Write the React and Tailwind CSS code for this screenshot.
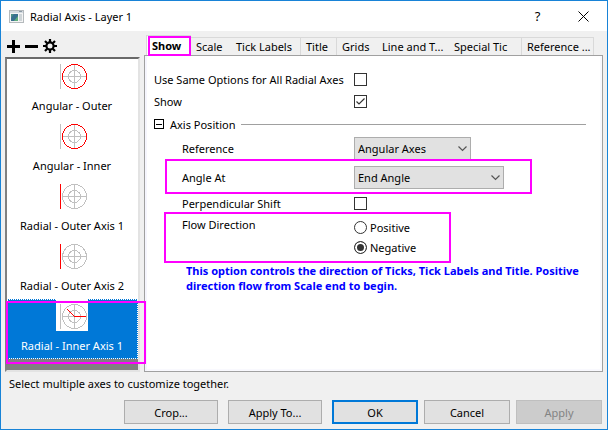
import React from "react";

const AXES = [
  { name: "Angular - Outer", kind: "angular" },
  { name: "Angular - Inner", kind: "angular" },
  { name: "Radial - Outer Axis 1", kind: "outer" },
  { name: "Radial - Outer Axis 2", kind: "outer" },
  { name: "Radial - Inner Axis 1", kind: "inner", selected: true },
];

const TABS = [
  { name: "Scale", className: "w-[40px]" },
  { name: "Tick Labels", className: "w-[70px] border-r" },
  { name: "Title", className: "w-[36px] border-r" },
  { name: "Grids", className: "w-[40px]" },
  { name: "Line and T...", className: "w-[72px]" },
  { name: "Special Tic", className: "w-[73px] border-r" },
  { name: "Reference ...", className: "w-[72px] border-r" },
];

const BUTTON = "h-6 border text-center";
const CHECK =
  "block size-[13px] shrink-0 appearance-none border border-[#333] bg-white";

function Highlight({ className }) {
  return (
    <span
      aria-hidden="true"
      className={`pointer-events-none absolute z-10 border-2 border-[#ff00ff] ${className}`}
    />
  );
}

function AxisIcon({ kind }) {
  const gray = "#c0c0c0";
  const red = "#ff0000";
  return (
    <svg
      width="32"
      height="32"
      viewBox="0 0 32 32"
      fill="none"
      className="bg-white"
      shapeRendering="crispEdges"
      aria-hidden="true"
    >
      <path d="M4.5 5v25" stroke={kind === "outer" ? red : gray} />
      <circle cx="18.5" cy="17.5" r="6" stroke={gray} />
      <path d="M18.5 5v25M6 17.5h25" stroke={gray} />
      <circle
        cx="18.5"
        cy="17.5"
        r="12"
        stroke={kind === "angular" ? red : gray}
      />
      {kind === "inner" && <path d="M30 17.5H18.5L11 10" stroke={red} />}
    </svg>
  );
}

function Select({ id, value, className }) {
  return (
    <div className={`relative ${className}`}>
      <select
        id={id}
        defaultValue={value}
        className="h-[23px] w-full appearance-none border border-[#adadad] bg-[#e1e1e1] pl-[3px]"
      >
        <option>{value}</option>
      </select>
      <svg
        className="pointer-events-none absolute top-[9px] right-1"
        width="9"
        height="6"
        viewBox="0 0 9 6"
        fill="none"
        stroke="#555"
        aria-hidden="true"
      >
        <path d="M.5.5l4 4 4-4" strokeWidth="1.2" />
      </svg>
    </div>
  );
}

function CheckBox({ id, checked }) {
  return (
    <span className="relative">
      <input id={id} type="checkbox" defaultChecked={checked} className={CHECK} />
      {checked && (
        <svg
          className="pointer-events-none absolute top-0 left-0"
          width="13"
          height="13"
          viewBox="0 0 13 13"
          fill="none"
          stroke="#333"
          aria-hidden="true"
        >
          <path d="M2.5 6.5l2.5 2.5 5.5-5.5" strokeWidth="1.2" />
        </svg>
      )}
    </span>
  );
}

function Radio({ label, checked }) {
  return (
    <label className="flex h-5 items-center gap-[3px]">
      <input
        type="radio"
        name="flow"
        defaultChecked={checked}
        className="size-[13px] appearance-none rounded-full border border-[#333] bg-white checked:bg-[#333] checked:shadow-[inset_0_0_0_2px_#fff]"
      />
      {label}
    </label>
  );
}

export default function App() {
  return (
    <main className="flex min-h-screen flex-col border border-[#1883d7] bg-[#f0f0f0] font-['Noto_Sans','Open_Sans',sans-serif] text-[11px] leading-[15px] text-black">
      <header className="flex h-[30px] items-center bg-white pr-[18px] pl-2">
        <svg width="15" height="13" viewBox="0 0 15 13" aria-hidden="true">
          <rect x=".5" y=".5" width="14" height="12" fill="#f4f4f4" stroke="#b5babd" />
          <path d="M1 1h13v2H1z" fill="#d5dbe0" />
          <path d="M10 1.5h3" stroke="#8c9aa5" />
          <path d="M2 4h7v7H2z" fill="#4a8f86" />
          <path d="M2 8l3-4h4v3l-4 4H2z" fill="#38708f" />
          <path d="M5 11l4-5v5z" fill="#5fae7c" />
          <path d="M10 4h3v7h-3z" fill="#cfd5d8" />
        </svg>
        <h1 className="ml-[6px] flex-1">Radial Axis - Layer 1</h1>
        <button type="button" aria-label="Help" className="mr-9 w-[9px] text-[13px]">
          ?
        </button>
        <button type="button" aria-label="Close">
          <svg width="11" height="11" viewBox="0 0 11 11" stroke="#000" aria-hidden="true">
            <path d="M.5.5l10 10M10.5.5l-10 10" />
          </svg>
        </button>
      </header>

      <div className="flex flex-1 pr-1 pl-1">
        <aside className="flex w-[135px] flex-col">
          <div className="flex h-[26px] items-center gap-[5px] pt-1 pl-[2px]">
            <button type="button" aria-label="Add axis">
              <svg width="13" height="13" viewBox="0 0 13 13" aria-hidden="true">
                <path d="M5 0h3v5h5v3H8v5H5V8H0V5h5z" />
              </svg>
            </button>
            <button type="button" aria-label="Remove axis">
              <svg width="13" height="13" viewBox="0 0 13 13" aria-hidden="true">
                <path d="M0 5h13v3H0z" />
              </svg>
            </button>
            <button type="button" aria-label="Settings">
              <svg width="14" height="14" viewBox="0 0 14 14" fill="none" stroke="#000" aria-hidden="true">
                <circle cx="7" cy="7" r="3.6" strokeWidth="2.2" />
                <path
                  d="M7 0v3M7 11v3M0 7h3M11 7h3M2 2l2.200 2.200M9.800 9.800L12 12M12 2L9.800 4.200M4.200 9.800L2 12"
                  strokeWidth="2.200"
                />
              </svg>
            </button>
          </div>
          <ul className="relative flex-1 border-2 border-t-[#696969] border-r-[#e3e3e3] border-b-[#e3e3e3] border-l-[#808080] bg-[#808080]">
            {AXES.map((axis) => (
              <li key={axis.name} className="relative">
                <button
                  type="button"
                  className={`flex h-[60px] w-full flex-col items-center pr-px ${
                    axis.selected
                      ? "bg-[#0078d7] text-white outline-1 -outline-offset-1 outline-dotted outline-white"
                      : "bg-white"
                  }`}
                >
                  <AxisIcon kind={axis.kind} />
                  <span className="mt-[7px]">{axis.name}</span>
                </button>
                {axis.selected && (
                  <Highlight className="top-[2px] -right-2 -bottom-[5px] -left-px" />
                )}
              </li>
            ))}
          </ul>
        </aside>

        <section className="ml-1 flex flex-1 flex-col">
          <div role="tablist" className="flex h-6 items-end pt-1 pl-[2px]">
            <button
              type="button"
              role="tab"
              aria-selected="true"
              className="relative h-5 w-[45px] border-t border-l border-[#d9d9d9] bg-white pl-[5px] text-left font-bold"
            >
              Show
              <Highlight className="top-0 right-0 -bottom-px left-px" />
            </button>
            {TABS.map((tab) => (
              <button
                key={tab.name}
                type="button"
                role="tab"
                aria-selected="false"
                className={`h-[18px] border-t border-[#d9d9d9] pb-px pl-[5px] text-left whitespace-nowrap ${tab.className}`}
              >
                {tab.name}
              </button>
            ))}
          </div>

          <div className="flex-1 border border-[#a0a0a0] bg-white pt-3 pr-4 pl-[9px] shadow-[inset_2px_0_0_#f5f5fd,inset_-2px_-2px_0_#f9f9fe]">
            <div className="flex h-[22px] items-center">
              <label htmlFor="same" className="w-[200px] whitespace-nowrap">
                Use Same Options for All Radial Axes
              </label>
              <CheckBox id="same" />
            </div>
            <div className="flex h-[22px] items-center">
              <label htmlFor="show" className="w-[200px]">
                Show
              </label>
              <CheckBox id="show" checked />
            </div>
            <div className="flex h-6 items-center">
              <button
                type="button"
                aria-label="Collapse"
                className="flex size-[10px] items-center justify-center border border-black"
              >
                <span className="h-px w-[6px] bg-black" />
              </button>
              <h2 className="ml-[6px]">Axis Position</h2>
              <span className="ml-[5px] h-px flex-1 bg-[#a0a0a0]" />
            </div>

            <div className="pl-7">
              <div className="flex h-[25px] items-center">
                <label htmlFor="reference" className="w-[172px]">
                  Reference
                </label>
                <Select id="reference" value="Angular Axes" className="w-[117px]" />
              </div>
              <div className="relative flex h-[33px] items-center">
                <label htmlFor="angle" className="w-[172px]">
                  Angle At
                </label>
                <Select id="angle" value="End Angle" className="w-[150px]" />
                <Highlight className="-top-[2px] bottom-0 -left-[17px] w-[367px]" />
              </div>
              <div className="flex h-[18px] items-center">
                <label htmlFor="shift" className="w-[172px]">
                  Perpendicular Shift
                </label>
                <CheckBox id="shift" />
              </div>
              <fieldset className="relative flex h-[51px] pt-[5px]">
                <Highlight className="top-0 bottom-0 -left-[18px] w-[287px]" />
                <span className="w-[172px]">Flow Direction</span>
                <div>
                  <Radio label="Positive" />
                  <Radio label="Negative" checked />
                </div>
              </fieldset>
              <p className="pl-1 font-bold text-[#0000ff]">
                This option controls the direction of Ticks, Tick Labels and Title. Positive
                direction flow from Scale end to begin.
              </p>
            </div>
          </div>
        </section>
      </div>

      <footer className="pt-1 pr-[5px] pb-[5px]">
        <p className="mb-[9px] pl-2">Select multiple axes to customize together.</p>
        <div className="flex justify-end gap-[6px]">
          <button type="button" className={`${BUTTON} mr-1 w-[94px] border-[#adadad] bg-[#e1e1e1]`}>
            Crop...
          </button>
          <button type="button" className={`${BUTTON} mr-1 w-[94px] border-[#adadad] bg-[#e1e1e1]`}>
            Apply To...
          </button>
          <button
            type="button"
            className={`${BUTTON} w-[86px] border-[#0078d7] bg-[#e1e1e1] inset-ring inset-ring-[#0078d7]`}
          >
            OK
          </button>
          <button type="button" className={`${BUTTON} w-[86px] border-[#adadad] bg-[#e1e1e1]`}>
            Cancel
          </button>
          <button
            type="button"
            disabled
            className={`${BUTTON} w-[86px] border-[#bfbfbf] bg-[#ccc] text-[#838383]`}
          >
            Apply
          </button>
        </div>
      </footer>
    </main>
  );
}
